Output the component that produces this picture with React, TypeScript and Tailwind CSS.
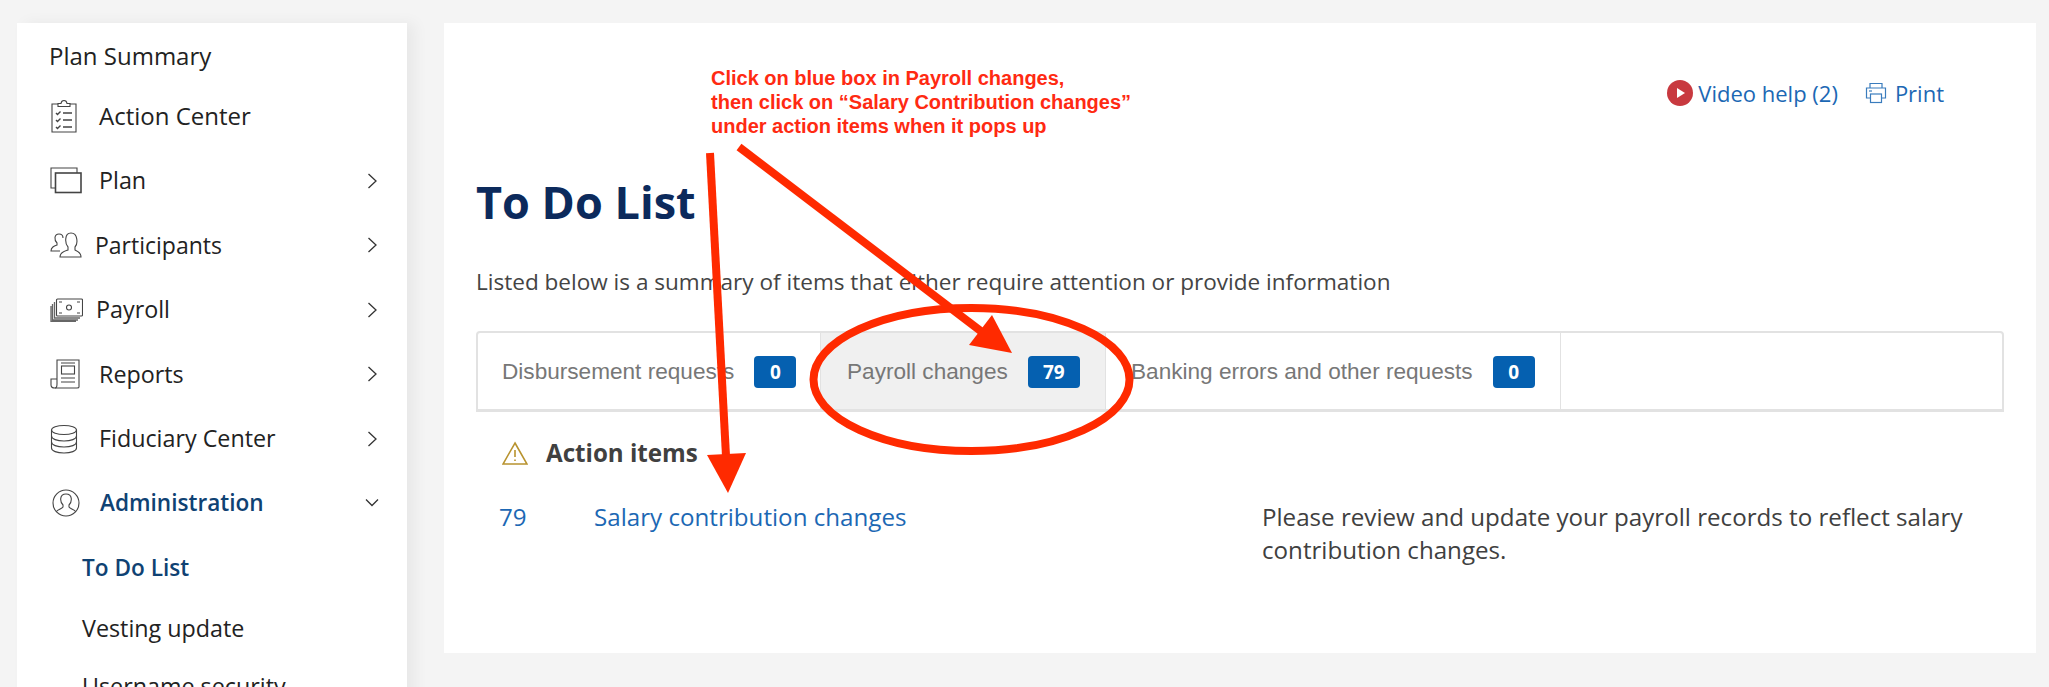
import React from "react";

const Chevron = ({ down }: { down?: boolean }) => (
  <svg width="14" height="16" viewBox="0 0 14 16" fill="none" stroke="#333" strokeWidth="1.3" className="shrink-0">
    {down ? <path d="M1 4.5 L7 10.5 L13 4.5" /> : <path d="M3.5 1 L11 8 L3.5 15" />}
  </svg>
);

const stroke = { fill: "none", stroke: "#444", strokeWidth: 1.1 };

const ClipboardIcon = () => (
  <svg width="28" height="34" viewBox="0 0 28 34" {...stroke}>
    <path d="M8 5 H2 V33 H26 V5 H20" />
    <path d="M8 7.5 V4.5 H11 C11.5 0.5 16.5 0.5 17 4.5 H20 V7.5 Z" />
    <path d="M6 14 l1.5 1.5 l3 -3 M6 21 l1.5 1.5 l3 -3 M6 28 l1.5 1.5 l3 -3" strokeWidth="1.4" />
    <path d="M13 14 H22 M13 21 H22 M13 28 H22" strokeWidth="1.4" />
  </svg>
);
const PlanIcon = () => (
  <svg width="32" height="27" viewBox="0 0 32 27" {...stroke}>
    <path d="M5 21 H1 V1 H27 V6" />
    <rect x="5.5" y="6" width="25.5" height="19.5" strokeWidth="1.6" />
  </svg>
);
const PeopleIcon = () => (
  <svg width="32" height="26" viewBox="0 0 32 26" {...stroke}>
    <path d="M10 19 H1 C1 15 4 14 7 13 V11 C4 8 4 2 9 2 C12 2 13 4 13 6" />
    <path d="M14 25 H31 C31 20 27 19 25 18 V15 C28 12 28 1 21 1 C14 1 15 12 18 15 V18 C15 19 10 20 10 25 Z" />
  </svg>
);
const MoneyIcon = () => (
  <svg width="33" height="24" viewBox="0 0 33 24" {...stroke}>
    <rect x="6.5" y="1" width="26" height="17" rx="1" />
    <circle cx="19" cy="9.5" r="2.5" />
    <path d="M9 4 h3 M27 4 h3 M9 15 h3 M27 15 h3" />
    <path d="M4.5 4 V20 H30 M2.5 6 V22 H28 M1 8 V23.5 H26" strokeWidth="1.3" stroke="#666" />
  </svg>
);
const ReportIcon = () => (
  <svg width="30" height="30" viewBox="0 0 30 30" {...stroke}>
    <path d="M7 25 V1 H29 V28 C29 29 28 29 27 29 H5 C2 29 1 28 1 26 V20 H7" />
    <path d="M5 29 C7 29 7 27 7 25" />
    <rect x="11.5" y="7" width="13" height="8" />
    <path d="M11 4 H25 M11 19 H25 M11 23 H25" />
  </svg>
);
const DbIcon = () => (
  <svg width="28" height="30" viewBox="0 0 28 30" {...stroke}>
    <ellipse cx="14" cy="6" rx="12.5" ry="4.5" />
    <path d="M1.5 6 V24 C1.5 27 7 29 14 29 C21 29 26.5 27 26.5 24 V6" />
    <path d="M1.5 12 C1.5 15 7 17 14 17 C21 17 26.5 15 26.5 12" />
    <path d="M1.5 18 C1.5 21 7 23 14 23 C21 23 26.5 21 26.5 18" />
  </svg>
);
const UserIcon = () => (
  <svg width="28" height="28" viewBox="0 0 28 28" {...stroke}>
    <circle cx="14" cy="14" r="13" />
    <path d="M4 23 C6 20 10 20 11 18 V16 C8 13 7 5 14 5 C21 5 20 13 17 16 V18 C18 20 22 20 24 23" />
  </svg>
);

const nav: { label: string; icon: React.ReactNode; gap: string; chev?: boolean; size?: string }[] = [
  { label: "Action Center", icon: <ClipboardIcon />, gap: "gap-[21px]", size: "text-[24px]" },
  { label: "Plan", icon: <PlanIcon />, gap: "gap-[17px]", chev: true },
  { label: "Participants", icon: <PeopleIcon />, gap: "gap-[13px]", chev: true, size: "text-[23px]" },
  { label: "Payroll", icon: <MoneyIcon />, gap: "gap-[13px]", chev: true },
  { label: "Reports", icon: <ReportIcon />, gap: "gap-[19px]", chev: true },
  { label: "Fiduciary Center", icon: <DbIcon />, gap: "gap-[21px]", chev: true },
];

function Sidebar() {
  return (
    <aside className="w-[390px] shrink-0 bg-white shadow-[8px_0_14px_rgba(0,0,0,0.05)] pl-[33px] pr-[28px] text-[#222] text-[23.3px]">
      <div className="h-[61px] pt-[16px] -ml-px leading-[34px] text-[24px]">Plan Summary</div>
      {nav.map((n) => (
        <div key={n.label} className="h-[64.5px] flex items-center">
          <div className={`flex items-center flex-1 ${n.gap}`}>
            {n.icon}
            <span className={n.size}>{n.label}</span>
          </div>
          {n.chev && <Chevron />}
        </div>
      ))}
      <div className="h-[64.5px] flex items-center">
        <div className="flex items-center flex-1 gap-[20px] pl-[2px]">
          <UserIcon />
          <span className="font-semibold text-[#0f4273] text-[22.6px]">Administration</span>
        </div>
        <Chevron down />
      </div>
      <div className="pl-[32px]">
        <div className="h-[65px] flex items-center font-semibold text-[#0f4273] text-[22.6px]">To Do List</div>
        <div className="h-[55px] flex items-center">Vesting update</div>
        <div className="h-[61px] flex items-center">Username security</div>
      </div>
    </aside>
  );
}

function Badge({ n, w }: { n: string; w: string }) {
  return (
    <span className={`${w} h-[32px] shrink-0 rounded-[4px] bg-[#0560b0] text-white text-[19px] font-bold flex items-center justify-center font-['Open_Sans']`}>
      {n}
    </span>
  );
}

function Tabs() {
  return (
    <div className="flex h-[81px] border-2 border-[#e2e2e2] border-b-[3px] rounded-t-[4px] text-[22.6px] text-[#777] font-['Liberation_Sans',sans-serif]">
      <div className="w-[343px] flex items-center pl-[24px] pt-[2px] gap-[20px] border-r border-[#e2e2e2]">
        <span className="whitespace-nowrap">Disbursement requests</span>
        <Badge n="0" w="w-[42px]" />
      </div>
      <div className="w-[285px] flex items-center pl-[26px] pt-[2px] gap-[20px] bg-[#f0f0f0] border-r border-[#e2e2e2]">
        <span className="whitespace-nowrap">Payroll changes</span>
        <Badge n="79" w="w-[52px]" />
      </div>
      <div className="w-[455px] flex items-center pl-[25px] pt-[2px] gap-[20px] border-r border-[#e2e2e2]">
        <span className="whitespace-nowrap">Banking errors and other requests</span>
        <Badge n="0" w="w-[42px]" />
      </div>
    </div>
  );
}

function Main() {
  return (
    <main className="ml-[37px] w-[1592px] h-[630px] bg-white pl-[32px] pr-[32px] text-[24.15px] text-[#404040]">
      <div className="flex justify-end items-center gap-[27px] pt-[50px] pr-[60px] h-[90px] text-[22px] text-[#1c68b4] leading-[24px]">
        <div className="flex items-center gap-[5px]">
          <svg width="26" height="26" viewBox="0 0 26 26">
            <circle cx="13" cy="13" r="13" fill="#c8393f" />
            <path d="M10 8 L18 13 L10 18 Z" fill="#fff" />
          </svg>
          <span>Video help (2)</span>
        </div>
        <div className="flex items-center gap-[8px]">
          <svg width="22" height="22" viewBox="0 0 22 22" fill="none" stroke="#3a7cbd" strokeWidth="1.2">
            <path d="M5 6 V1.5 H17 V6" />
            <path d="M5 16 H1.5 V6 H20.5 V16 H17" />
            <rect x="5.5" y="12" width="11" height="8.5" />
            <path d="M4 9 H7" />
          </svg>
          <span>Print</span>
        </div>
      </div>
      <h1 className="mt-[59px] text-[45px] leading-[60px] font-bold text-[#0c2a5c]">To Do List</h1>
      <p className="mt-[34px] leading-[32px] text-[#444] text-[22.56px] whitespace-nowrap">
        Listed below is a summary of items that either require attention or provide information
      </p>
      <div className="mt-[33px]">
        <Tabs />
      </div>
      <div className="mt-[24px] pl-[26px] flex items-center gap-[18px]">
        <svg width="26" height="24" viewBox="0 0 26 24" fill="none" stroke="#b8932f" strokeWidth="1.6">
          <path d="M13 2 L25 23 H1 Z" />
          <path d="M13 9 V16 M13 18.5 V20" />
        </svg>
        <span className="font-bold leading-[33px]">Action items</span>
      </div>
      <div className="mt-[31px] flex pl-[23px] leading-[33px]">
        <span className="w-[95px] text-[#1c68b4]">79</span>
        <span className="w-[668px] text-[#1c68b4]">Salary contribution changes</span>
        <p className="w-[740px]">
          Please review and update your payroll records to reflect salary contribution changes.
        </p>
      </div>
    </main>
  );
}

export default function App() {
  return (
    <div className="relative h-[687px] overflow-hidden bg-[#f4f4f4] pl-[17px] pt-[23px] font-['Open_Sans',sans-serif]">
      <div className="flex h-[760px] items-start">
        <div className="flex self-stretch"><Sidebar /></div>
        <Main />
      </div>
      <div className="absolute left-[711px] top-[66px] text-[20px] leading-[24px] font-bold text-[#ff2a12] font-['Liberation_Sans',sans-serif] whitespace-nowrap">
        Click on blue box in Payroll changes,
        <br />
        then click on “Salary Contribution changes”
        <br />
        under action items when it pops up
      </div>
      <svg className="absolute left-0 top-0 pointer-events-none" width="2049" height="687" viewBox="0 0 2049 687">
        <ellipse cx="971.5" cy="379.5" rx="158" ry="71.5" fill="none" stroke="#ff2a00" strokeWidth="8" />
        <path d="M710 153 L726 456" stroke="#ff2a00" strokeWidth="8" fill="none" />
        <path d="M707 455 L746 453 L728 493 Z" fill="#ff2a00" />
        <path d="M739 147 L982 332" stroke="#ff2a00" strokeWidth="8" fill="none" />
        <path d="M992 315 L969 345 L1012 353 Z" fill="#ff2a00" />
      </svg>
    </div>
  );
}
